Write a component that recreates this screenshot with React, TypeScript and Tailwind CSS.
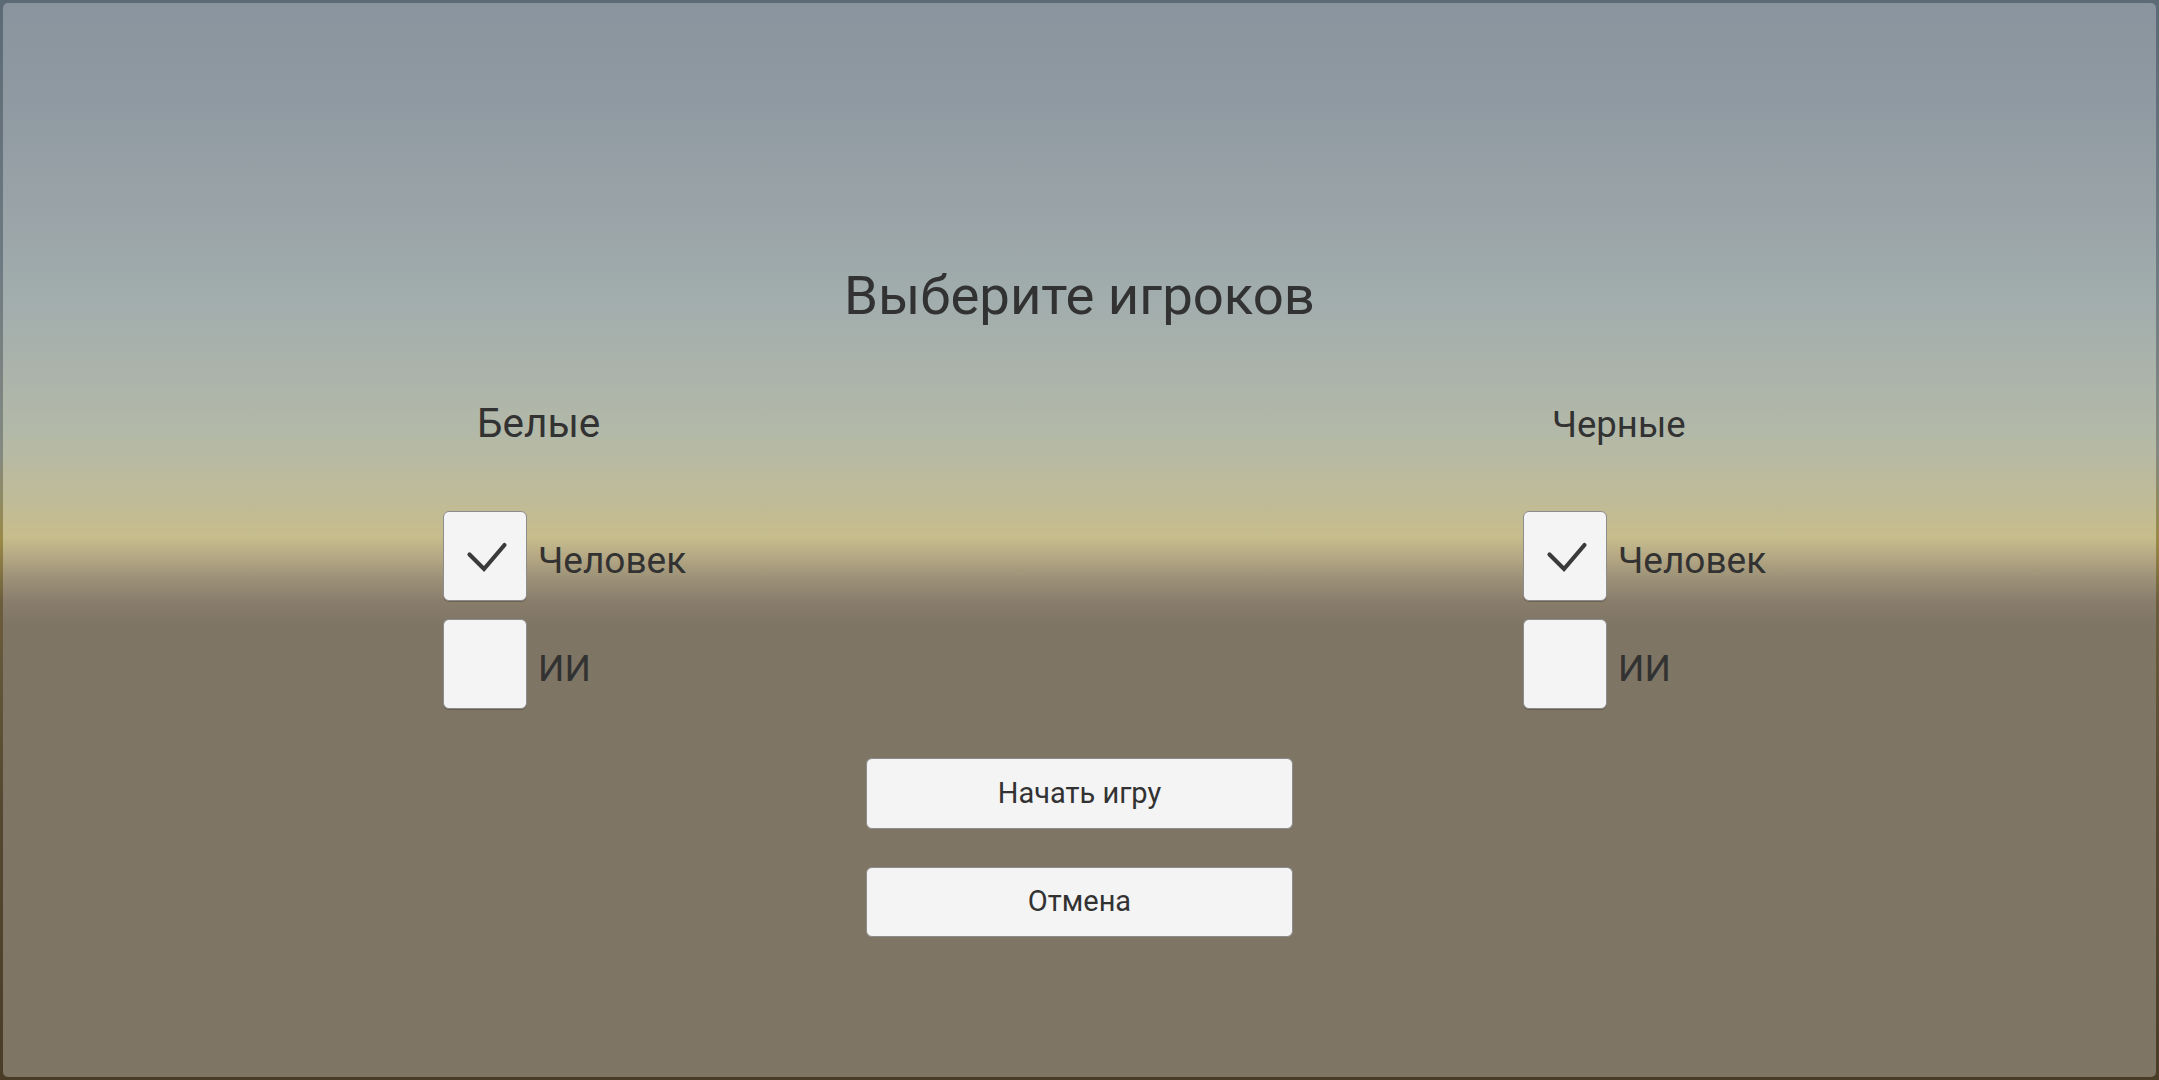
import React from "react";

const font = { fontFamily: "Roboto, 'Noto Sans', 'Liberation Sans', sans-serif" };

function Check() {
  return (
    <svg width="84" height="90" viewBox="0 0 84 90" className="absolute inset-0">
      <path
        d="M25.5 42.5 L40 57 L60.5 33"
        fill="none"
        stroke="#3a3a3a"
        strokeWidth="4.2"
        strokeLinecap="round"
        strokeLinejoin="miter"
      />
    </svg>
  );
}

function Row({ label, checked }: { label: string; checked?: boolean }) {
  return (
    <div className="flex items-center h-[90px]">
      <div className="relative w-[84px] h-[90px] shrink-0 rounded-[6px] bg-[#f4f4f4] border border-[#8c8c8c] shadow-[0_1px_0_rgba(60,50,40,0.35)]">
        {checked && <Check />}
      </div>
      <span className="ml-[11px] mt-[9px] text-[37px] leading-none text-[#323232]">{label}</span>
    </div>
  );
}

function Column({ title, titleClass }: { title: string; titleClass: string }) {
  return (
    <div className="flex flex-col">
      <div className="h-[40px] flex items-end">
        <div className={`leading-none text-[#323232] ${titleClass}`}>{title}</div>
      </div>
      <div className="mt-[67px] flex flex-col gap-[18px]">
        <Row label="Человек" checked />
        <Row label="ИИ" />
      </div>
    </div>
  );
}

export default function App() {
  return (
    <div
      className="w-[2159px] h-[1080px] p-[3px] bg-[linear-gradient(to_bottom,#5c6a76_0%,#6f7b82_25%,#848a80_42%,#9a8a48_50%,#6a5c3c_56%,#564830_75%,#4a3d28_100%)]"
      style={font}
    >
      <div className="w-full h-full rounded-[5px] flex flex-col bg-[linear-gradient(to_bottom,#8a949e_0%,#909aa2_10%,#a2adad_28%,#b3b9a8_40%,#bfbb98_46%,#c7bd8c_49.7%,#b5a985_51.5%,#9d9178_53.5%,#887d6b_55.8%,#7f7565_58%,#7f7565_100%)]">
        <div className="pt-[265px] text-center text-[54.5px] leading-none text-[#323232]">Выберите игроков</div>
        <div className="mt-[81px] flex pl-[440px]">
          <div className="w-[1080px]">
            <Column title="Белые" titleClass="ml-[34px] text-[40.5px]" />
          </div>
          <Column title="Черные" titleClass="ml-[29px] text-[36.5px]" />
        </div>
        <div className="mt-[49px] flex flex-col items-center gap-[38px]">
          <button className="w-[427px] h-[71px] rounded-[6px] bg-[#f4f4f4] border border-[#8c8c8c] text-[29px] text-[#323232] leading-none">
            Начать игру
          </button>
          <button className="w-[427px] h-[70px] rounded-[6px] bg-[#f4f4f4] border border-[#8c8c8c] text-[29px] text-[#323232] leading-none">
            Отмена
          </button>
        </div>
      </div>
    </div>
  );
}
